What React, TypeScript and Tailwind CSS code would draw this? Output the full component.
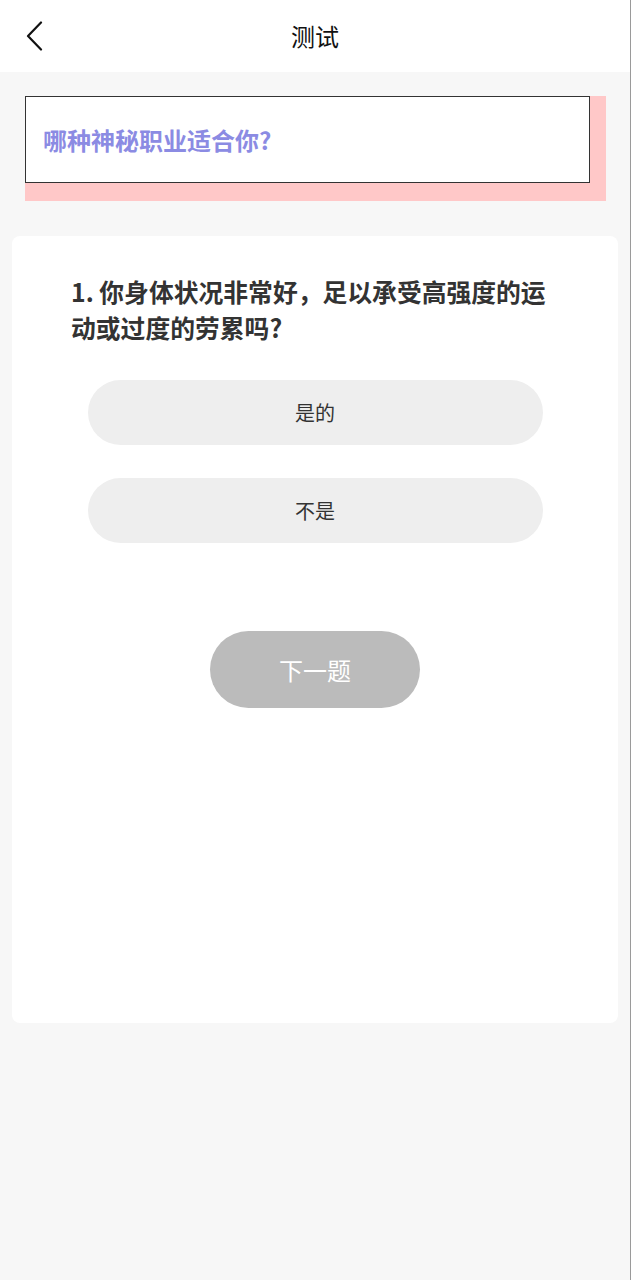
import React from "react";

const font = { fontFamily: '"Noto Sans CJK SC", "Noto Sans", sans-serif' };

export default function App() {
  return (
    <div
      className="flex min-h-[1280px] w-full flex-col border-r border-[#9a9a9a] bg-[#f7f7f7]"
      style={font}
    >
      {/* Header */}
      <div className="relative flex h-[72px] shrink-0 items-center justify-center bg-white">
        <button className="absolute left-[24px] top-[21px] flex h-[30px] w-[20px] items-center">
          <svg width="20" height="30" viewBox="0 0 20 30" fill="none">
            <polyline
              points="17,1.5 4,15 17,28.5"
              stroke="#111"
              strokeWidth="2.2"
              strokeLinecap="round"
              strokeLinejoin="round"
            />
          </svg>
        </button>
        <h1 className="text-[24px] leading-none text-[#111]">测试</h1>
      </div>

      {/* Title card */}
      <div className="mt-[24px] ml-[25px] w-[581px] bg-[#ffc8c8] pr-[16px] pb-[18px]">
        <div className="flex h-[87px] items-center border border-[#333] bg-white pl-[17px]">
          <span className="text-[24px] font-bold text-[#8b8be3]">
            哪种神秘职业适合你?
          </span>
        </div>
      </div>

      {/* Question card */}
      <div className="mx-[12px] mt-[35px] flex h-[787px] flex-col items-center rounded-[8px] bg-white pt-[37px]">
        <p className="w-[488px] text-[24.8px] font-bold leading-[36px] text-[#333]">
          1. 你身体状况非常好，足以承受高强度的运
          <br />
          动或过度的劳累吗?
        </p>

        <div className="mt-[35px] flex flex-col gap-[33px]">
          {["是的", "不是"].map((opt) => (
            <button
              key={opt}
              className="flex h-[65px] w-[455px] items-center justify-center rounded-full bg-[#eeeeee] text-[20px] text-[#333]"
            >
              {opt}
            </button>
          ))}
        </div>

        <button className="mt-[88px] flex h-[77px] w-[210px] items-center justify-center rounded-full bg-[#bbbbbb] text-[24px] text-white">
          下一题
        </button>
      </div>
    </div>
  );
}
